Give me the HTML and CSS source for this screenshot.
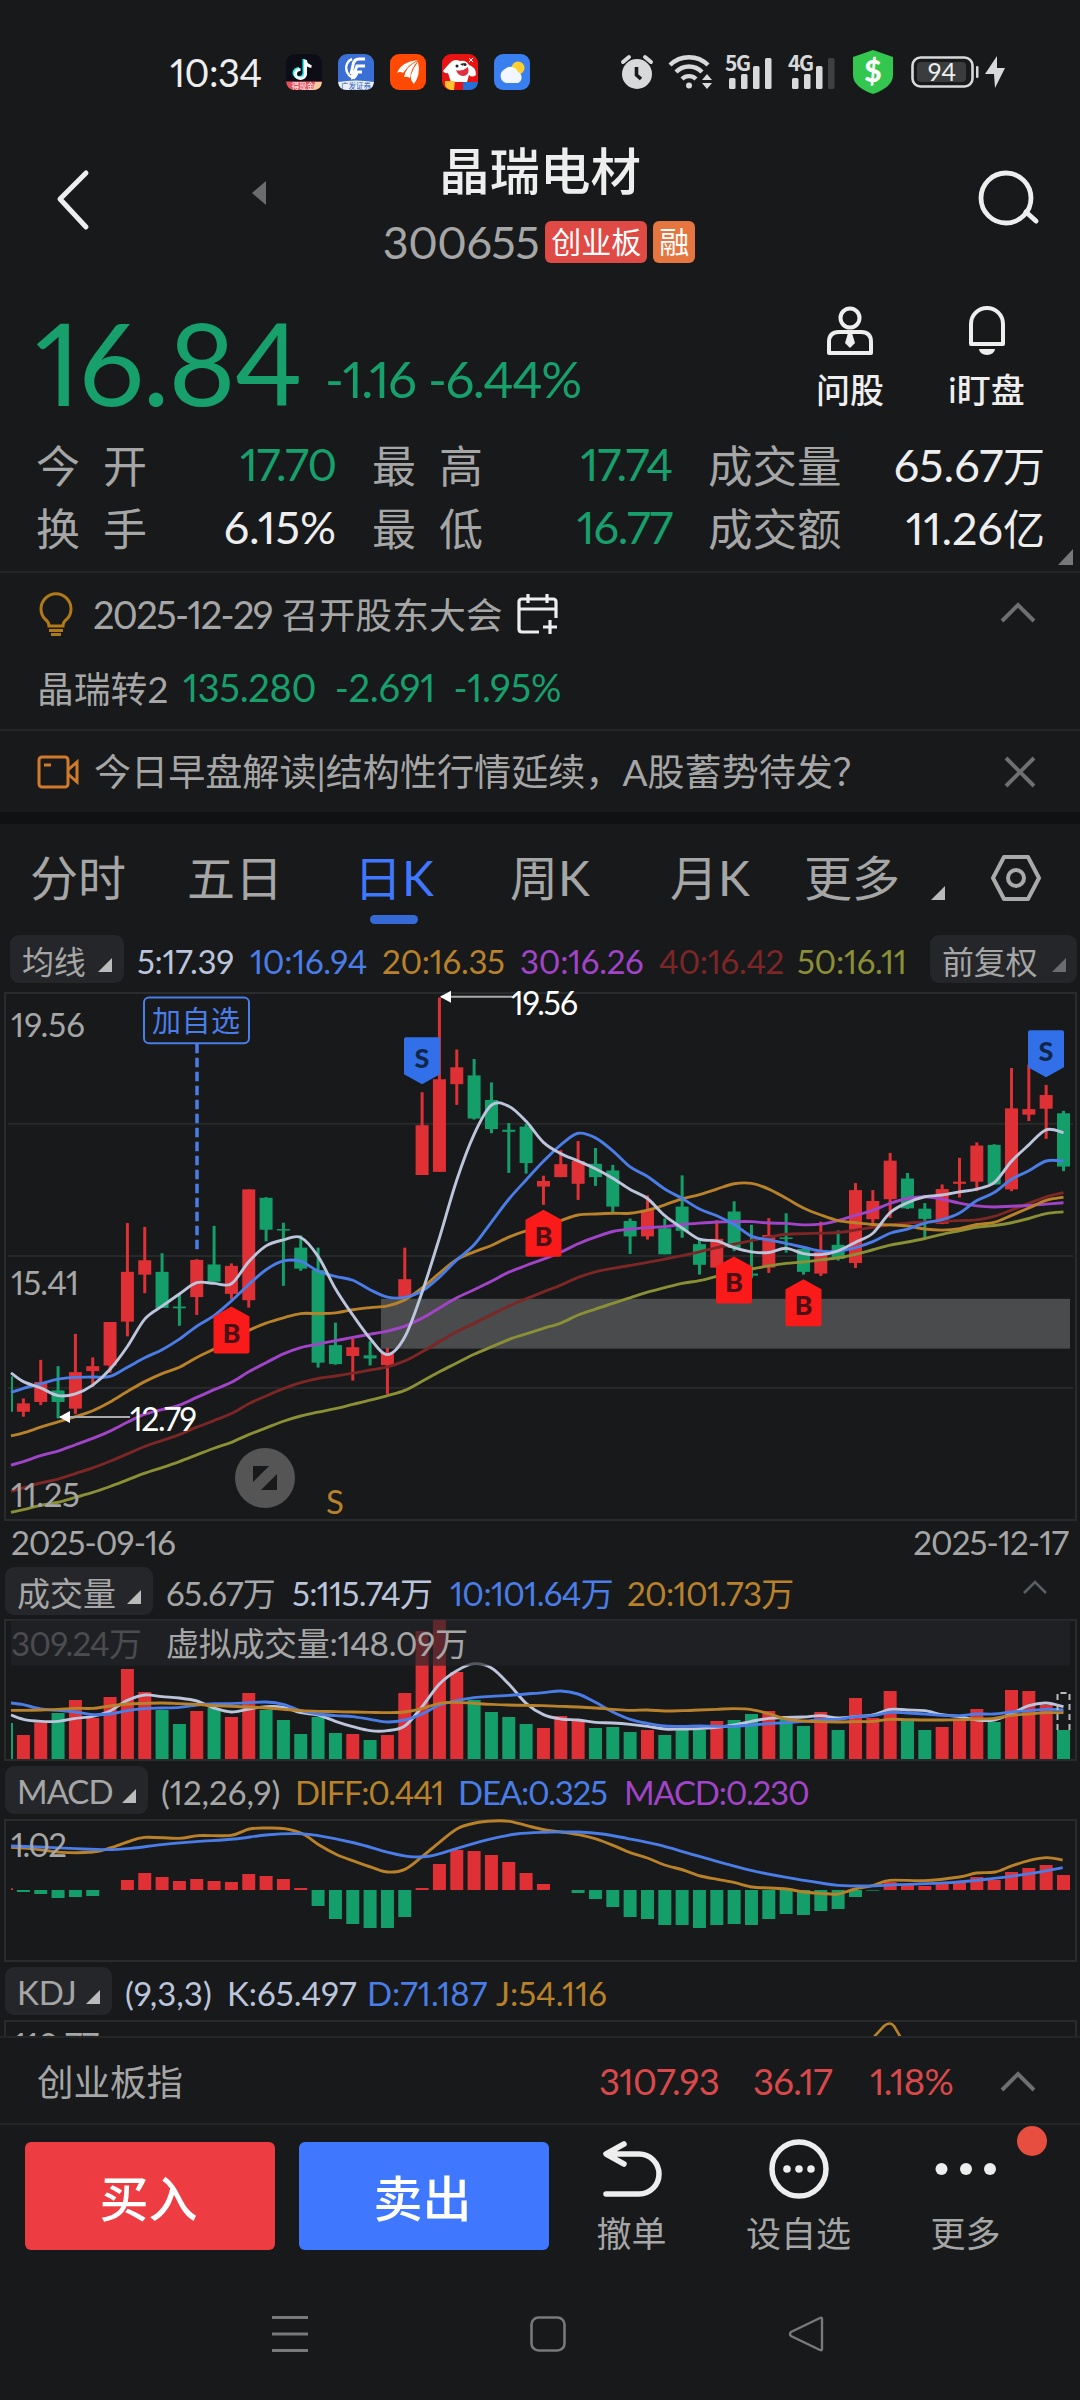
FILE: index.html
```html
<!DOCTYPE html>
<html lang="zh-CN">
<head>
    <meta charset="UTF-8">
    <meta name="viewport" content="width=device-width, initial-scale=1.0">
    <title>晶瑞电材 300655</title>
    <link rel="stylesheet" href="styles.css">
</head>

<body>
    <div class="status">
        <span class="time">10:34</span>
        <div class="apps">
            <svg width="36" height="36" viewBox="0 0 36 36"><rect width="36" height="36" rx="9" fill="#0d0d18"/><path d="M18 5v14a5 4.500 0 1 1-5-4.500M18 6q1 5 6 5.500" fill="none" stroke="#25f4ee" stroke-width="3"/><path d="M19.500 6v14a5 4.500 0 1 1-5-4.500M19.500 7q1 5 6 5.500" fill="none" stroke="#fff" stroke-width="3"/><path d="M0 27.500h36q-1 8.500-9 8.500H9q-8 0-9-8.500z" fill="#e8505a"/><path d="M29 28h7q-1 8-9 8z" fill="#f6c9a0"/><text x="17" y="34.500" class="tiny" fill="#fff">得现金</text></svg>
            <svg width="36" height="36" viewBox="0 0 36 36"><rect width="36" height="36" rx="9" fill="#3a6fd6"/><path d="M17 24a10 10 0 0 1-3-19" fill="none" stroke="#fff" stroke-width="2.500"/><path d="M27 5h-6q-5 0-6 6l-2 9M27 12h-8q-3 8-6 11M24 18h-5q-1 6-6 6" fill="none" stroke="#fff" stroke-width="3"/><path d="M0 28q18-3 36 0-1 8-9 8H9q-8 0-9-8z" fill="#e8eefa"/><text x="18" y="34.500" class="tiny" fill="#2d5cb8">广发证券</text></svg>
            <svg width="36" height="36" viewBox="0 0 36 36"><rect width="36" height="36" rx="9" fill="#ff4a05"/><path d="M7 19Q11 8 28 6q-8 4-11 8l-4 5q-3-2-6 0zM14 23q2-11 14-16-7 7-8 17-3-2-6-1zM24 30q-4-4-3-9 2-7 7-13 3 12-4 22z" fill="#fff"/></svg>
            <svg width="36" height="36" viewBox="0 0 36 36"><rect width="36" height="36" rx="9" fill="#e81414"/><path d="M1 17q3-4 7-8 4-5 10-2 6-1 9 4 7 2 7 10-4 3-7 0l-2 7H9l-3-9q-3 1-5-2z" fill="#fff"/><circle cx="15" cy="12" r="1.500" fill="#222"/><circle cx="23" cy="10.500" r="1.500" fill="#222"/><path d="M18 10l4-1-1 3z" fill="#222"/><path d="M14 16q6 2 12-3 2 8-4 9-6 0-8-6z" fill="#e03040"/><path d="M3 27h10l-1 9H9q-5-1-6-5z" fill="#ffc02e"/><path d="M21 28h15q-1 8-9 8h-6z" fill="#2470d8"/><path d="M27 4l4 4M31 4l-4 4" stroke="#fff"/></svg>
            <svg width="36" height="36" viewBox="0 0 36 36"><rect width="36" height="36" rx="9" fill="#3a7ff0"/><circle cx="24" cy="14" r="6.500" fill="#ffd02e"/><path d="M12 29a7.500 7.500 0 0 1-1-14 8 8 0 0 1 13 3 6 6 0 0 1 0 11z" fill="#f2f6ff"/></svg>
        </div>
        <svg class="alarm" width="32" height="36" viewBox="0 0 32 36"><circle cx="16" cy="20" r="15" fill="#d8d9da"/><path d="M15.500 13v8l4.500 4" fill="none" stroke="#17191a" stroke-width="3.600"/><path d="M2 8l6-5M30 8l-6-5" stroke="#d8d9da" stroke-width="4" stroke-linecap="round"/></svg>
        <svg class="wifi" width="46" height="36" viewBox="0 0 46 36"><g fill="none" stroke="#d8d9da" stroke-width="4.400"><path d="M2 11a27 27 0 0 1 38 0"/><path d="M8 18a18 18 0 0 1 26 0"/><path d="M14 25a10 10 0 0 1 14 0"/></g><circle cx="21" cy="31.500" r="3" fill="#d8d9da"/><path d="M34 26l5-6 5 6zM34 29l5 6 5-6z" fill="#d8d9da"/></svg>
        <svg class="signal" width="48" height="36" viewBox="0 0 48 36"><text x="0" y="17" class="net">5G</text><g fill="#d8d9da"><rect x="4" y="24" width="6.500" height="11" rx="1.500"/><rect x="16" y="20" width="6.500" height="15" rx="1.500"/><rect x="28" y="12" width="6.500" height="23" rx="1.500"/><rect x="40" y="4" width="6.500" height="31" rx="1.500"/></g></svg>
        <svg class="signal two" width="48" height="36" viewBox="0 0 48 36"><text x="0" y="17" class="net">4G</text><g fill="#d8d9da"><rect x="4" y="24" width="6.500" height="11" rx="1.500"/><rect x="16" y="20" width="6.500" height="15" rx="1.500"/><rect x="28" y="12" width="6.500" height="23" rx="1.500"/><rect x="40" y="4" width="6.500" height="31" rx="1.500" fill="#3d3f41"/></g></svg>
        <svg class="shield" width="42" height="44" viewBox="0 0 42 44"><path d="M21 0L41 7v18q0 12-20 19Q1 37 1 25V7z" fill="#34c74f"/><text x="21" y="32" class="dollar">$</text></svg>
        <svg class="battery" width="68" height="32" viewBox="0 0 68 32"><rect x="1.500" y="1.500" width="60" height="29" rx="8" fill="none" stroke="#d8d9da" stroke-width="2.600"/><rect x="6" y="6" width="49" height="20" rx="4" fill="#3a3c3e"/><rect x="65" y="10" width="2.500" height="12" rx="1" fill="#d8d9da"/><text x="31" y="25" class="pct">94</text></svg>
        <svg class="bolt" width="20" height="32" viewBox="0 0 20 32"><path d="M12 0L0 18h9l1 14L20 12h-8z" fill="#d8d9da"/></svg>
    </div>

    <div class="header">
        <svg class="back" width="36" height="62" viewBox="0 0 36 62"><path d="M31 4L5 30l26 28" fill="none" stroke="#eee" stroke-width="5" stroke-linecap="round" stroke-linejoin="round"/></svg>
        <svg class="prev" width="14" height="24" viewBox="0 0 14 24"><path d="M14 0v24L0 12z" fill="#6b6c6d"/></svg>
        <div class="stock">
            <h1>晶瑞电材</h1>
            <div class="code"><span class="num">300655</span><span class="tag">创业板</span><span class="tag orange">融</span></div>
        </div>
        <svg class="search" width="62" height="60" viewBox="0 0 62 60"><circle cx="28" cy="29" r="25" fill="none" stroke="#eee" stroke-width="4.800"/><path d="M48 43l10 9" stroke="#eee" stroke-width="5" stroke-linecap="round"/></svg>
    </div>

    <div class="quote">
        <div class="price_row">
            <span class="price">16.84</span>
            <span class="change">-1.16</span>
            <span class="change rate">-6.44%</span>
            <div class="tool ask">
                <svg width="48" height="50" viewBox="0 0 48 50"><g fill="none" stroke="#eee" stroke-width="4"><circle cx="24" cy="12" r="9.500"/><path d="M3 47V36q0-10 10-10h22q10 0 10 10v11z" stroke-linejoin="round"/></g><path d="M22 27h4l3 10-5 5-5-5z" fill="#eee"/></svg>
                <span>问股</span>
            </div>
            <div class="tool watch">
                <svg width="38" height="50" viewBox="0 0 38 50"><path d="M3 38V18a16 16 0 0 1 32 0v20z" fill="none" stroke="#eee" stroke-width="4" stroke-linejoin="round"/><path d="M11 43h16a8 6 0 0 1-16 0z" fill="#eee"/></svg>
                <span>i盯盘</span>
            </div>
        </div>
        <div class="stats">
            <span class="label wide">今开</span><span class="val green">17.70</span>
            <span class="label wide">最高</span><span class="val green">17.74</span>
            <span class="label">成交量</span><span class="val">65.67<i>万</i></span>
            <span class="label wide">换手</span><span class="val">6.15%</span>
            <span class="label wide">最低</span><span class="val green">16.77</span>
            <span class="label">成交额</span><span class="val">11.26<i>亿</i></span>
        </div>
        <svg class="corner" width="15" height="16" viewBox="0 0 15 16"><path d="M15 0v16H0z" fill="#77787a"/></svg>
    </div>

    <div class="notice">
        <div class="line meeting">
            <svg width="38" height="44" viewBox="0 0 38 44"><g fill="none" stroke="#b07a18" stroke-width="3"><path d="M12 34q0-4-4-7a15 15 0 1 1 22 0q-4 3-4 7z"/><path d="M12 38.500h14M14 42.500h10"/></g></svg>
            <p><span class="date">2025-12-29</span>召开股东大会</p>
            <svg class="cal" width="42" height="42" viewBox="0 0 42 42"><g fill="none" stroke="#eee" stroke-width="3.200"><path d="M22 39H5q-3 0-3-3V9q0-3 3-3h31q3 0 3 3v16M2 16h37M11 1v9M30 1v9M33 27v14M26 34h14"/></g></svg>
            <svg class="chev" width="36" height="22" viewBox="0 0 36 22"><path d="M2 20L18 4l16 16" fill="none" stroke="#6e6f70" stroke-width="4"/></svg>
        </div>
        <div class="line bond">
            <p>晶瑞转2</p><b>135.280</b><b>-2.691</b><b>-1.95%</b>
        </div>
    </div>

    <div class="line video">
        <svg width="43" height="34" viewBox="0 0 43 34"><g fill="none" stroke="#d17a2c" stroke-width="3"><rect x="2" y="2" width="29" height="30" rx="3"/><path d="M31 15l9-8v20l-9-8M7 10h7"/></g></svg>
        <p>今日早盘解读|结构性行情延续，A股蓄势待发？</p>
        <svg class="close" width="32" height="32" viewBox="0 0 32 32"><path d="M2 2l28 28M30 2L2 30" stroke="#6e6f70" stroke-width="4"/></svg>
    </div>

    <div class="tabs">
        <span>分时</span><span>五日</span><span class="active">日K</span><span>周K</span><span>月K</span><span>更多</span>
        <svg class="tri" width="14" height="14" viewBox="0 0 14 14"><path d="M14 0v14H0z" fill="#bbb"/></svg>
        <svg class="hex" width="52" height="48" viewBox="0 0 52 48"><g fill="none" stroke="#aaa" stroke-width="4"><path d="M14 3h24l11 21-11 21H14L3 24z" stroke-linejoin="round"/><circle cx="26" cy="24" r="8"/></g></svg>
    </div>

    <div class="bar ma">
        <span class="btn">均线<svg width="14" height="14" viewBox="0 0 14 14"><path d="M14 0v14H0z" fill="#bbb"/></svg></span>
        <span class="c5">5:17.39</span><span class="c10">10:16.94</span><span class="c20">20:16.35</span><span class="c30">30:16.26</span><span class="c40">40:16.42</span><span class="c50">50:16.11</span>
        <span class="btn right">前复权<svg width="14" height="14" viewBox="0 0 14 14"><path d="M14 0v14H0z" fill="#6b6c6d"/></svg></span>
    </div>
    <svg id="kline" class="chart" width="1080" height="529"></svg>
    <div class="dates"><span>2025-09-16</span><span>2025-12-17</span></div>

    <div class="bar vol">
        <span class="btn">成交量<svg width="14" height="14" viewBox="0 0 14 14"><path d="M14 0v14H0z" fill="#bbb"/></svg></span>
        <span>65.67万</span><span class="c5">5:115.74万</span><span class="c10">10:101.64万</span><span class="c20">20:101.73万</span>
        <svg class="fold" width="24" height="14" viewBox="0 0 24 14"><path d="M1 13L12 2l11 11" fill="none" stroke="#5b5e66" stroke-width="2.600"/></svg>
    </div>
    <svg id="volume" class="chart" width="1080" height="143"></svg>

    <div class="bar macd">
        <span class="btn">MACD<svg width="14" height="14" viewBox="0 0 14 14"><path d="M14 0v14H0z" fill="#bbb"/></svg></span>
        <span class="param">(12,26,9)</span><span class="c20 diff">DIFF:0.441</span><span class="c10">DEA:0.325</span><span class="c30">MACD:0.230</span>
    </div>
    <svg id="macd" class="chart" width="1080" height="143"></svg>

    <div class="bar kdj">
        <span class="btn">KDJ<svg width="14" height="14" viewBox="0 0 14 14"><path d="M14 0v14H0z" fill="#bbb"/></svg></span>
        <span class="c5">(9,3,3)</span><span class="c5">K:65.497</span><span class="c10">D:71.187</span><span class="c20">J:54.116</span>
    </div>
    <svg id="kdj" class="chart" width="1080" height="16"></svg>

    <div class="index">
        <span class="name">创业板指</span><span>3107.93</span><span>36.17</span><span>1.18%</span>
        <svg width="36" height="22" viewBox="0 0 36 22"><path d="M2 20L18 4l16 16" fill="none" stroke="#6e6f70" stroke-width="4"/></svg>
    </div>

    <div class="actions">
        <button class="buy">买入</button>
        <button class="sell">卖出</button>
        <div class="act">
            <svg width="60" height="60" viewBox="0 0 60 60"><path d="M22 5L4 15l18 10M5 15h32a20 20 0 0 1 0 40H4" fill="none" stroke="#eee" stroke-width="5.500" stroke-linecap="round" stroke-linejoin="round"/></svg>
            <span>撤单</span>
        </div>
        <div class="act">
            <svg width="60" height="60" viewBox="0 0 60 60"><circle cx="30" cy="30" r="27" fill="none" stroke="#eee" stroke-width="5.500"/><g fill="#eee"><circle cx="18" cy="30" r="3.800"/><circle cx="30" cy="30" r="3.800"/><circle cx="42" cy="30" r="3.800"/></g></svg>
            <span>设自选</span>
        </div>
        <div class="act">
            <svg width="62" height="60" viewBox="0 0 62 60"><g fill="#eee"><circle cx="6.500" cy="30" r="6"/><circle cx="31" cy="30" r="6"/><circle cx="55" cy="30" r="6"/></g></svg>
            <span>更多</span>
            <em class="dot"></em>
        </div>
    </div>

    <div class="nav">
        <svg width="36" height="36" viewBox="0 0 36 36"><path d="M0 1.500h36M0 18h36M0 34.500h36" stroke="#77797a" stroke-width="3"/></svg>
        <svg width="36" height="36" viewBox="0 0 36 36"><rect x="1.500" y="1.500" width="33" height="33" rx="7" fill="none" stroke="#77797a" stroke-width="2.600"/></svg>
        <svg width="36" height="36" viewBox="0 0 36 36"><path d="M34 3v30q0 2-2 1L3 20q-2-2 0-4L32 2q2-1 2 1z" fill="none" stroke="#77797a" stroke-width="2.400"/></svg>
    </div>

    <script src="charts.js"></script>
</body>
</html>
```

FILE: styles.css
```css
body{
    margin: 0;
    width: 1080px;
    height: 2400px;
    overflow: hidden;
    background-color: #17191a;
    color: #a6a6a6;
    font-family: Lato, "Noto Sans CJK SC", sans-serif;
    font-variant-numeric: proportional-nums;
}

svg{
    display: block;
    flex: none;
}

p, h1{
    margin: 0;
}

span, p, h1, b{
    white-space: nowrap;
}

/* status bar */
.status{
    display: flex;
    align-items: center;
    height: 144px;
    padding-left: 170px;
    box-sizing: border-box;
}

    .status svg, #kline{
        overflow: visible;
    }

    .status > .time{
        width: 116px;
        color: #eee;
        font-size: 38px;
        letter-spacing: -0.5px;
    }

    .status > .apps{
        display: flex;
        gap: 16px;
        width: 335px;
    }

    .wifi{
        margin-left: 15px;
    }

    .signal{
        margin-left: 11px;
    }

    .signal.two{
        margin-left: 15px;
    }

    .shield{
        margin-left: 16px;
    }

    .battery{
        margin-left: 17px;
    }

    .bolt{
        margin-left: 6px;
    }

.tiny{
    font-size: 7.500px;
    text-anchor: middle;
}

.net{
    font-family: "Noto Sans CJK SC", sans-serif;
    font-size: 21px;
    font-weight: bold;
    letter-spacing: -1.500px;
    fill: #d8d9da;
}

.dollar{
    font-size: 30px;
    font-weight: 900;
    fill: #fff;
    text-anchor: middle;
}

.pct{
    font-size: 25px;
    fill: #eee;
    text-anchor: middle;
}

/* title */
.header{
    display: flex;
    height: 146px;
    padding: 0 40px 0 55px;
}

    .header > .back{
        margin-top: 25px;
    }

    .header > .prev{
        margin: 37px 0 0 161px;
    }

.stock{
    display: flex;
    flex-direction: column;
    align-items: center;
    width: 548px;
}

    .stock > h1{
        height: 72px;
        line-height: 54px;
        font-size: 50.500px;
        font-weight: 500;
        color: #eee;
    }

    .stock > .code{
        display: flex;
        align-items: center;
        gap: 6px;
        height: 52px;
        margin-right: 2px;
    }

        .code > .num{
            font-size: 45px;
            letter-spacing: -0.500px;
            line-height: 52px;
        }

        .code > .tag{
            padding: 0 6px;
            height: 42px;
            line-height: 40px;
            border-radius: 6px;
            background-color: #e04a45;
            color: #fff;
            font-size: 30px;
        }

        .code > .orange{
            background-color: #e5763f;
        }

    .header > .search{
        margin: 25px 0 0 auto;
    }

/* price block */
.quote{
    position: relative;
    height: 281px;
    border-bottom: 2px solid #232527;
}

.price_row{
    display: flex;
    height: 142px;
    padding: 0 0 0 35px;
    color: #179f6c;
}

    .price_row > .price{
        width: 290px;
        font-size: 115px;
        line-height: 142px;
        letter-spacing: -1.500px;
    }

    .price_row > .change{
        width: 103px;
        font-size: 51px;
        letter-spacing: -1.500px;
        line-height: 178px;
    }

    .price_row > .rate{
        width: 371px;
    }

.tool{
    display: flex;
    flex-direction: column;
    align-items: center;
    width: 102px;
    padding-top: 16px;
    color: #eee;
    font-size: 34px;
    font-weight: 500;
}

    .tool > span{
        line-height: 67px;
    }

    .tool.watch{
        width: 171px;
    }

.stats{
    display: grid;
    grid-template-columns: 130px 170px 36px 130px 170px 36px 137px 200px;
    grid-auto-rows: 63px;
    margin-left: 36px;
    align-items: center;
    font-size: 44px;
}

    .stats > .label:nth-child(1), .stats > .label:nth-child(7){
        grid-column: 1;
    }

    .stats > .label:nth-child(3), .stats > .label:nth-child(9){
        grid-column: 4;
    }

    .stats > .label:nth-child(5), .stats > .label:nth-child(11){
        grid-column: 7;
        font-size: 44.500px;
    }

    .stats > .wide{
        letter-spacing: 23px;
    }

    .stats > .val{
        text-align: right;
        color: #eee;
        font-size: 45px;
    }

    .stats > .green{
        color: #179f6c;
        letter-spacing: -1.200px;
    }

    .stats i{
        font-style: normal;
        font-size: 42px;
    }

.quote > .corner{
    position: absolute;
    right: 7px;
    bottom: 6px;
}

/* notices */
.notice{
    height: 156px;
    border-bottom: 2px solid #232527;
}

.line{
    display: flex;
    align-items: center;
    padding: 0 44px 0 37px;
    font-size: 36.800px;
}

    .line > p, .bond > b{
        padding-bottom: 3px;
    }

    .meeting{
        height: 82px;
    }

    .meeting > p{
        margin: 0 14px 0 18px;
    }

    .meeting .date{
        font-size: 38px;
        letter-spacing: -1.700px;
        margin-right: 10px;
    }

    .chev{
        margin: 0 0 4px auto;
    }

    .bond{
        height: 66px;
    }

    .bond > p{
        width: 146px;
    }

    .bond > b{
        font-weight: 400;
        font-size: 38px;
        letter-spacing: -0.300px;
        color: #179f6c;
        margin-right: 18.500px;
    }

    .video{
        height: 81px;
        border-bottom: 12px solid #101113;
    }

    .video > p{
        margin-left: 14px;
        font-size: 37.100px;
    }

    .video > .close{
        margin-left: auto;
    }

/* period tabs */
.tabs{
    display: grid;
    grid-template-columns: 157px 167px 156px 160px 134px 127px 59px 52px;
    align-items: center;
    box-sizing: border-box;
    height: 111px;
    padding: 0 0 10px 30px;
    font-size: 48px;
}

    .tabs > .active{
        position: relative;
        color: #3f78ff;
    }

    .tabs > .active::after{
        content: "";
        position: absolute;
        left: 16px;
        top: 75px;
        width: 48px;
        height: 9px;
        border-radius: 5px;
        background-color: #3569d6;
    }

    .tabs > .tri{
        margin-top: 36px;
    }

    .tabs > .hex{
        margin-top: 6px;
    }

/* indicator rows */
.bar{
    display: grid;
    align-items: center;
    height: 48px;
    padding-left: 5px;
    font-size: 33px;
}

    .bar > span{
        padding-top: 3px;
    }

.bar > .btn{
    display: flex;
    align-items: center;
    justify-content: space-between;
    box-sizing: border-box;
    height: 48px;
    padding: 2px 12px 0;
    border-radius: 9px;
    background-color: #252629;
}

    .btn > svg{
        margin-top: 10px;
    }

.ma{
    grid-template-columns: 127px 113px 132px 138px 139px 138px 133px 147px;
    padding-left: 10px;
    margin-bottom: 9px;
    letter-spacing: -0.300px;
}

    .ma > .btn{
        width: 114px;
        font-size: 32px;
    }

    .bar > .right{
        width: 147px;
        padding-right: 11px;
    }

.vol{
    grid-template-columns: 161px 126px 158px 177px 396px 24px;
    margin-bottom: 6px;
    letter-spacing: -0.700px;
}

    .vol > .btn{
        width: 148px;
        letter-spacing: 0;
    }

    .vol > .fold{
        margin-top: -8px;
    }

.macd{
    grid-template-columns: 156px 134px 163px 166px 300px;
    margin: 4px 0 5px;
    letter-spacing: -1.200px;
}

    .macd > .btn{
        width: 143px;
        letter-spacing: -1px;
    }

    .macd > .param{
        letter-spacing: 0;
    }

    .macd > .diff{
        letter-spacing: -1.300px;
    }

.kdj{
    grid-template-columns: 120px 102px 140px 129px 300px;
    margin: 5px 0 5px;
}

    .kdj > .btn{
        width: 107px;
    }

.c5{ color: #bcc5dc; }
.c10{ color: #4a7de8; }
.c20{ color: #b9822a; }
.c30{ color: #a244c8; }
.c40{ color: #7d2626; }
.c50{ color: #8b8f35; }

.dates{
    display: flex;
    justify-content: space-between;
    align-items: center;
    box-sizing: border-box;
    height: 44px;
    padding: 0 12px 2px 11px;
    font-size: 33px;
    letter-spacing: -0.900px;
}

.chart text{
    font-size: 33px;
}

/* bottom */
.index{
    display: grid;
    grid-template-columns: 562px 154px 117px 130px 36px;
    align-items: center;
    height: 85px;
    padding-left: 37px;
    border-top: 2px solid #232527;
    border-bottom: 2px solid #232527;
    color: #d9484a;
    font-size: 36.500px;
    letter-spacing: -0.700px;
}

    .index > .name{
        color: #a6a6a6;
        letter-spacing: 0;
    }

.actions{
    display: flex;
    height: 127px;
    padding: 17px 0 0 25px;
}

    .actions > button{
        width: 250px;
        height: 108px;
        margin-right: 24px;
        padding: 0 3px 2px 0;
        border: none;
        border-radius: 6px;
        color: #fff;
        font-family: inherit;
        font-size: 49px;
        font-weight: 500;
    }

    .actions > .buy{
        background-color: #ed3d42;
    }

    .actions > .sell{
        background-color: #3f78ff;
    }

.act{
    position: relative;
    display: flex;
    flex-direction: column;
    align-items: center;
    width: 167px;
    margin-top: -3px;
    font-size: 35px;
}

    .actions > .sell + .act{
        margin-left: -25px;
    }

    .act > span{
        line-height: 68px;
    }

.dot{
    position: absolute;
    right: 2px;
    top: -13px;
    width: 30px;
    height: 30px;
    border-radius: 50%;
    background-color: #e74e40;
}

.nav{
    display: flex;
    justify-content: center;
    gap: 222px;
    padding: 47px 0 0 15px;
}
```

FILE: charts.js
```js
const NS = "http://www.w3.org/2000/svg";
const RED = "#df3035", GREEN = "#149e6a";
const C = {ma5: "#bcc5dc", ma10: "#4a7de8", ma20: "#b9822a", ma30: "#a244c8", ma40: "#7d2626", ma50: "#8b8f35"};
const STEP = 17.335;
const X = i => 23.4 + STEP * i;   // i = -1 is the day cut by the left edge

function add(svg, tag, attrs, text){
    const el = document.createElementNS(NS, tag);
    for(const k in attrs) el.setAttribute(k, attrs[k]);
    if(text) el.textContent = text;
    svg.appendChild(el);
    return el;
}

function rect(svg, x, y, w, h, fill, extra){
    return add(svg, "rect", {x, y, width: w, height: h, fill, ...extra});
}

// smooth curve through the points
function curve(svg, pts, color){
    let d = `M${pts[0]}`;
    for(let i = 0; i < pts.length - 1; i++){
        const p0 = pts[i - 1] || pts[i], p1 = pts[i], p2 = pts[i + 1], p3 = pts[i + 2] || p2;
        d += `C${p1[0] + (p2[0] - p0[0]) / 6} ${p1[1] + (p2[1] - p0[1]) / 6} ${p2[0] - (p3[0] - p1[0]) / 6} ${p2[1] - (p3[1] - p1[1]) / 6} ${p2[0]} ${p2[1]}`;
    }
    add(svg, "path", {d, fill: "none", stroke: color, "stroke-width": 2.9});
}

function series(svg, values, y, color){
    curve(svg, values.map((v, n) => [n ? X(n - 1) : 11, y(v)]), color);
}

function frame(svg, h){
    rect(svg, 5, 1, 1071, h, "none", {stroke: "#292b2d", "stroke-width": 2});
}

function label(svg, x, y, str, fill, width, extra){
    add(svg, "text", {x, y, fill, textLength: width, ...extra}, str);
}

// [up, high, low, body top, body bottom]
const candles = [
    [0,1130,1231,1130,1231],[1,1193,1245,1207,1231],[1,1083,1212,1146,1203],[0,1101,1250,1170,1203],[1,1009,1237,1118,1222],
    [1,1076,1160,1101,1115],[1,975,1120,975,1099],[1,693,1016,832,974],[1,704,893,799,840],[0,779,935,832,935],
    [0,893,986,931,936],[1,796,955,798,904],[0,701,860,811,860],[1,808,910,815,895],[1,597,934,597,913],
    [0,619,745,621,712],[0,692,872,710,714],[0,728,829,763,823],[0,763,1105,827,1091],[0,977,1097,1041,1095],
    [1,1022,1142,1047,1072],[0,1030,1099,1070,1079],[1,1050,1180,1065,1098],[1,763,908,853,907],[1,320,556,414,556],
    [1,50,547,283,547],[1,198,356,249,297],[0,225,398,272,395],[0,292,437,342,425],[0,408,550,427,433],
    [0,410,552,418,522],[1,558,641,573,589],[1,485,562,525,562],[1,459,627,516,581],[0,479,587,524,562],
    [0,527,661,543,646],[0,680,781,687,731],[1,614,740,655,731],[0,680,782,708,782],[0,557,735,646,715],
    [0,738,840,753,812],[1,685,820,738,820],[0,631,773,660,764],[0,698,850,837,843],[1,679,835,727,820],
    [0,665,777,734,737],[0,765,840,767,832],[1,689,844,775,837],[0,714,800,755,795],[1,579,821,599,807],
    [1,599,695,630,682],[1,493,678,515,625],[0,550,653,566,651],[0,636,735,652,681],[1,583,696,596,695],
    [1,507,620,575,581],[1,463,602,472,575],[0,468,584,470,583],[1,251,602,366,597],[1,241,402,368,384],
    [1,299,453,328,367],[0,373,545,380,532]
];

const ma = {
    ma50: [1518,1510,1498,1489,1475,1461,1444,1425,1406,1390,1373,1354,1335,1318,1296,1277,1258,1243,1232,1222,1210,1198,1185,1170,1144,1117,1092,1067,1046,1025,1009,993,978,955,938,922,906,890,877,865,857,845,835,824,815,808,804,798,792,782,769,756,747,737,725,715,705,700,692,680,666,661],
    ma40: [1458,1448,1434,1423,1407,1391,1372,1351,1330,1313,1296,1275,1256,1236,1208,1186,1165,1148,1136,1129,1121,1112,1103,1086,1060,1031,1003,979,954,930,909,889,870,848,832,822,814,805,796,786,775,763,753,743,733,725,723,722,720,713,705,698,693,690,688,686,684,674,656,637,618,606],
    ma30: [1383,1373,1356,1343,1325,1307,1286,1261,1238,1225,1212,1190,1168,1147,1117,1091,1066,1048,1038,1028,1019,1010,1001,987,964,935,906,883,859,833,814,796,776,752,733,717,710,706,703,697,693,690,689,689,693,694,698,696,686,671,657,637,623,618,625,636,644,647,645,643,639,635],
    ma20: [1300,1291,1275,1260,1245,1228,1203,1173,1145,1122,1104,1076,1052,1025,999,978,963,951,951,949,940,934,929,912,878,836,797,775,757,733,715,704,686,670,667,665,665,656,641,624,612,596,581,580,596,622,650,670,686,692,697,698,701,710,713,709,697,691,671,650,628,619],
    ma10: [1176,1164,1151,1138,1133,1132,1130,1104,1077,1054,1024,987,957,915,868,826,801,802,830,845,856,883,904,905,887,847,798,755,690,625,570,517,470,437,450,487,533,560,596,623,653,672,697,730,741,751,762,773,773,763,746,722,710,693,683,664,629,606,568,544,516,516],
    ma5: [1120,1145,1163,1185,1180,1155,1110,1045,967,930,895,863,865,866,803,758,741,734,788,880,955,1022,1068,1018,890,735,570,440,357,360,403,463,495,516,538,565,597,623,672,707,739,744,763,775,777,765,780,783,772,748,722,663,635,618,613,604,596,578,517,470,427,435]
};

function marker(svg, x, y, letter){
    const buy = letter == "B";
    const d = buy ? `M${x} ${y}l18 10v35q0 2-2 2h-32q-2 0-2-2v-35z` : `M${x} ${y + 47}l18-10v-35q0-2-2-2h-32q-2 0-2 2v35z`;
    add(svg, "path", {d, fill: buy ? "#fb1a1a" : "#3170e8"});
    add(svg, "text", {x, y: y + (buy ? 36 : 31), fill: buy ? "#4a1015" : "#12264a", "font-weight": 900, "text-anchor": "middle", style: "font-size: 27px"}, letter);
}

function drawKline(){
    const svg = document.getElementById("kline");
    const y = v => v / 2.851 - 12;
    frame(svg, 527);
    [410, 787, 1163].forEach(v => rect(svg, 8, y(v) - 1, 1065, 2, "#27292b"));
    candles.forEach(([up, hi, lo, top, bot], n) => {
        const x = X(n - 1), c = up ? RED : GREEN;
        if(n == 0){
            rect(svg, 11, y(hi), 2, y(lo) - y(hi), c);
            return;
        }
        rect(svg, x - 1.5, y(hi), 3, y(lo) - y(hi), c);
        rect(svg, x - 6.5, y(top), 13, Math.max(y(bot) - y(top), 1.5), c);
    });
    rect(svg, 381, y(909), 689, y(1051) - y(909), "#fff", {"fill-opacity": .22});
    for(const k in ma) series(svg, ma[k], y, C[k]);

    // note on the day it was added to the watch list
    rect(svg, 144, y(50), 105, y(180) - y(50), "#17191a", {rx: 5, stroke: C.ma10, "stroke-width": 2});
    label(svg, 152, 40, "加自选", C.ma10, 88, {style: "font-size: 29px"});
    add(svg, "path", {d: `M197 ${y(182)}V${y(770)}`, stroke: C.ma10, "stroke-width": 3.5, "stroke-dasharray": "9.500 4.500"});

    // highest and lowest price
    add(svg, "path", {d: `M441 ${y(48)}H512M60 ${y(1246)}H130`, stroke: "#aaa", "stroke-width": 2});
    add(svg, "path", {d: `M440 ${y(48)}l11-6v12zM59 ${y(1246)}l11-6v12z`, fill: "#fff"});
    label(svg, 511, 23, "19.56", "#fff", 67, {style: "font-size: 32px"});
    label(svg, 130, 439, "12.79", "#fff", 67, {style: "font-size: 32px"});

    label(svg, 11, 45, "19.56", "#a6a6a6", 74);
    label(svg, 11, 303, "15.41", "#a6a6a6", 68);
    label(svg, 11, 515, "11.25", "#a6a6a6", 69);

    marker(svg, 422, y(163), "S");
    marker(svg, 1046, y(143), "S");
    marker(svg, 231.5, y(931), "B");
    marker(svg, 543.5, y(655), "B");
    marker(svg, 734, y(788), "B");
    marker(svg, 803.5, y(853), "B");

    add(svg, "circle", {cx: 265, cy: 486, r: 30, fill: "#555"});
    add(svg, "path", {d: "M253 474h16l-16 16zM277 482v16h-16z", fill: "#17191a"});
    add(svg, "text", {x: 326, y: 522, fill: C.ma20}, "S");
}

function drawVolume(){
    const tops = [639,675,638,609,570,624,561,477,546,600,642,603,594,621,549,600,630,672,621,669,672,690,675,549,363,330,486,570,606,621,642,654,618,633,654,651,666,660,675,660,660,633,630,612,603,627,648,606,660,564,624,543,633,660,651,627,597,636,540,543,585,660];
    const m20 = [601,601,600,598,595,595,588,582,580,579,581,583,587,589,591,594,598,602,604,605,606,607,608,606,596,580,577,580,583,585,586,587,589,591,594,598,601,600,603,602,600,598,596,599,611,627,633,635,636,635,634,628,629,630,630,629,627,625,616,612,608,608];
    const m10 = [579,584,597,601,606,614,612,602,596,594,592,585,581,581,578,576,583,602,612,617,620,628,636,630,612,585,572,563,559,556,552,548,543,552,577,606,628,640,648,649,648,649,649,645,641,638,634,629,628,620,617,607,609,612,616,617,612,612,606,602,598,600];
    const m5 = [615,628,634,634,625,619,603,571,555,560,564,573,594,606,597,590,592,608,615,634,650,662,662,648,590,522,482,461,474,522,580,614,627,630,637,639,643,649,657,657,656,652,645,634,625,622,621,617,624,620,615,598,600,602,614,620,630,630,611,587,579,590];
    const svg = document.getElementById("volume");
    const y = v => v / 3 - 109;
    frame(svg, 140);
    tops.forEach((t, n) => {
        const c = candles[n][0] ? RED : GREEN, x = n ? X(n - 1) - 6.5 : 11;
        rect(svg, x, y(t), n ? 13 : 2, y(747) - y(t), c);
    });
    series(svg, m5, y, C.ma5);
    series(svg, m10, y, C.ma10);
    series(svg, m20, y, C.ma20);
    // estimate for the whole day
    add(svg, "path", {d: `M1057.500 ${y(660)}V${y(549)}H1069.500V${y(660)}`, fill: "none", stroke: "#bbb", "stroke-width": 2, "stroke-dasharray": "6 4"});
    rect(svg, 11, y(330), 1059, y(467) - y(330), "#232428", {"fill-opacity": .68});
    label(svg, 11, 37, "309.24万", "#4b4c4f", 131);
    label(svg, 166, 37, "虚拟成交量:148.09万", "#a6a6a6", 302);
}

function drawMacd(){
    const bars = [385,396,402,414,411,408,390,360,339,351,363,357,363,366,342,348,357,384,438,477,492,504,504,471,384,312,270,273,285,306,339,372,390,399,417,441,471,477,495,495,504,495,492,495,477,462,465,453,447,411,392,366,372,378,366,363,351,360,336,324,315,345];
    const diff = [[16,262],[45,266],[90,277],[135,276],[160,264],[185,246],[210,232],[260,235],[288,227],[335,226],[362,207],[386,204],[413,206],[440,222],[464,256],[490,285],[515,304],[540,322],[563,336],[588,328],[613,290],[638,247],[664,206],[690,189],[715,183],[740,184],[765,197],[790,209],[815,216],[840,224],[864,236],[890,256],[915,278],[940,294],[965,315],[992,330],[1017,348],[1042,358],[1067,368],[1092,381],[1117,384],[1142,387],[1167,396],[1192,400],[1217,402],[1242,387],[1267,377],[1292,361],[1342,362],[1393,351],[1418,339],[1445,336],[1470,317],[1495,301],[1520,293],[1543,300]];
    const dea = [[16,258],[70,262],[110,266],[155,269],[190,265],[235,254],[285,245],[340,237],[386,225],[430,221],[460,226],[515,249],[563,277],[595,290],[625,288],[664,265],[710,238],[750,222],[790,217],[840,216],[875,222],[910,235],[955,254],[1000,280],[1042,305],[1092,332],[1142,352],[1192,369],[1217,376],[1260,378],[1305,374],[1380,368],[1440,356],[1495,341],[1543,323]];
    const svg = document.getElementById("macd");
    const y = v => v / 3 - 59;
    frame(svg, 141);
    bars.forEach((b, n) => {
        if(b == 390) return;
        rect(svg, n ? X(n - 1) - 6.5 : 11, y(Math.min(b, 390)), n ? 13 : 2, Math.abs(b - 390) / 3, b < 390 ? RED : GREEN);
    });
    curve(svg, diff.map(p => [p[0] / 1.452, y(p[1])]), C.ma20);
    curve(svg, dea.map(p => [p[0] / 1.452, y(p[1])]), C.ma10);
    label(svg, 11, 38, "1.02", "#a6a6a6", 56);
}

// only the top strip of this chart is on screen
function drawKdj(){
    const svg = document.getElementById("kdj");
    frame(svg, 141);
    label(svg, 13, 37, "110.77", "#a6a6a6", 86);
    add(svg, "path", {d: "M873 18l11-12q6-5 10 0l7 12", fill: "none", stroke: C.ma20, "stroke-width": 2.6});
}

drawKline();
drawVolume();
drawMacd();
drawKdj();
```
